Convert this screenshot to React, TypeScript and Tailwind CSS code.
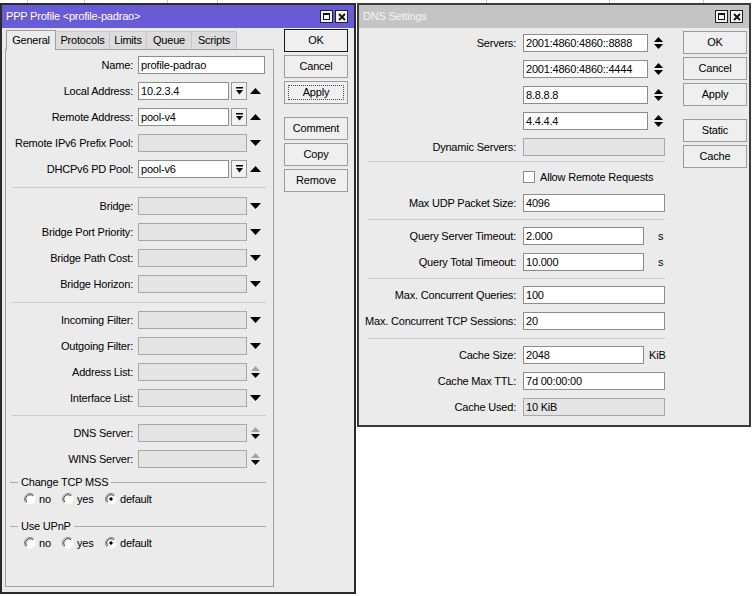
import React from 'react';

const FONT = "font-['Liberation_Sans',Arial,sans-serif]";

function TriUp({ gray }: { gray?: boolean }) {
  return (
    <svg width="11" height="6" viewBox="0 0 11 6">
      <polygon points="0,6 11,6 5.5,0" fill={gray ? '#a0a0a0' : '#000'} />
    </svg>
  );
}

function TriDown() {
  return (
    <svg width="11" height="6" viewBox="0 0 11 6">
      <polygon points="0,0 11,0 5.5,6" fill="#000" />
    </svg>
  );
}

function UpDown({ gray }: { gray?: boolean }) {
  return (
    <svg width="9" height="12" viewBox="0 0 9 12">
      <polygon points="0,5 9,5 4.5,0" fill={gray ? '#a3a3a3' : '#000'} />
      <polygon points="0,7 9,7 4.5,12" fill="#000" />
    </svg>
  );
}

function DropBtn() {
  return (
    <div className="ml-[2px] w-[16px] h-[18px] border border-[#9a9a9a] bg-[#f2f2f2] flex items-center justify-center">
      <svg width="7" height="8" viewBox="0 0 7 8">
        <rect x="0" y="0" width="7" height="1.5" fill="#000" />
        <polygon points="0,3 7,3 3.5,7.5" fill="#000" />
      </svg>
    </div>
  );
}

function Inp({ w, value, disabled }: { w: string; value?: string; disabled?: boolean }) {
  return (
    <div
      className={`${w} h-[18px] border pl-[2px] flex items-center whitespace-nowrap overflow-hidden ${
        disabled ? 'bg-[#e4e4e4] border-[#a8a8a8]' : 'bg-white border-[#8c8c8c]'
      }`}
    >
      {value}
    </div>
  );
}

function Row({ label, children }: { label: string; children: React.ReactNode }) {
  return (
    <div className="flex items-center h-[26px]">
      <div className="w-[132px] text-right pr-[5px] whitespace-nowrap">{label}</div>
      {children}
    </div>
  );
}

function DRow({ label, children }: { label?: string; children: React.ReactNode }) {
  return (
    <div className="flex items-center h-[26px]">
      <div className="w-[164px] text-right pr-[7px] whitespace-nowrap">{label}</div>
      {children}
    </div>
  );
}

function Icon({ children }: { children: React.ReactNode }) {
  return <div className="w-[16px] flex items-center justify-center">{children}</div>;
}

function Btn({ label, def, focus }: { label: string; def?: boolean; focus?: boolean }) {
  return (
    <div
      className={`relative h-[23px] flex items-center justify-center border bg-[#efefef] ${
        def ? 'border-[#1a1a1a]' : 'border-[#9b9b9b]'
      }`}
    >
      {label}
      {focus && <div className="absolute inset-[3px] border border-dotted border-[#444]" />}
    </div>
  );
}

function Radio({ on }: { on?: boolean }) {
  return (
    <svg width="12" height="12" viewBox="0 0 12 12">
      <circle cx="6" cy="6" r="5.5" fill="#fff" />
      <path d="M2.1 9.9 A5.5 5.5 0 0 1 9.9 2.1" stroke="#8a8a8a" fill="none" strokeWidth="1" />
      <path d="M3 9 A4.2 4.2 0 0 1 9 3" stroke="#3a3a3a" fill="none" strokeWidth="1" />
      {on && <circle cx="6" cy="6" r="1.7" fill="#000" />}
    </svg>
  );
}

function RadioRow() {
  return (
    <div className="flex items-center h-[18px] pl-[18px]">
      <div className="w-[38px] flex items-center gap-[3px]">
        <Radio />
        <span>no</span>
      </div>
      <div className="w-[43px] flex items-center gap-[3px]">
        <Radio />
        <span>yes</span>
      </div>
      <div className="flex items-center gap-[3px]">
        <Radio on />
        <span>default</span>
      </div>
    </div>
  );
}

function Group({ label }: { label: string }) {
  return (
    <div className="flex items-center h-[14px] ml-[4px] mr-[7px]">
      <div className="w-[8px] h-px bg-[#a8a8a8]" />
      <span className="mx-[3px] whitespace-nowrap">{label}</span>
      <div className="flex-1 h-px bg-[#a8a8a8]" />
    </div>
  );
}

function TitleBar({ title, active }: { title: string; active?: boolean }) {
  return (
    <div
      className={`h-[23px] flex items-center justify-between pl-[4px] pr-[6px] ${
        active ? 'bg-[#675bd6] text-white' : 'bg-[#c4c4c4] text-[#f4f4f4]'
      }`}
    >
      <span className="leading-none">{title}</span>
      <div className="flex gap-[2px]">
        <div className="w-[13px] h-[13px] border border-[#222] bg-[#f4f4f4] flex items-center justify-center">
          <div className="w-[7px] h-[7px] border border-[#111] border-t-2" />
        </div>
        <div className="w-[13px] h-[13px] border border-[#222] bg-[#f4f4f4] flex items-center justify-center">
          <svg width="8" height="8" viewBox="0 0 8 8">
            <path d="M1 1 L7 7 M7 1 L1 7" stroke="#111" strokeWidth="1.8" />
          </svg>
        </div>
      </div>
    </div>
  );
}

function Sep({ cls }: { cls: string }) {
  return <div className={`${cls} h-px bg-[#cdcdcd]`} />;
}

function PppWindow() {
  return (
    <div className="absolute left-0 top-[3px] w-[356px] h-[591px] border-2 border-[#2a2a2a] bg-[#ebebeb] flex flex-col">
      <TitleBar title="PPP Profile <profile-padrao>" active />
      <div className="flex flex-1 pt-[2px]">
        <div className="ml-[3px] w-[269px] flex flex-col">
          {/* tabs */}
          <div className="flex items-end h-[19px] pl-[1px]">
            <div className="relative z-10 w-[50px] h-[20px] -mb-px border border-b-0 border-[#9f9f9f] bg-[#ebebeb] flex items-center justify-center">
              General
            </div>
            <div className="w-[54px] h-[18px] border-t border-r border-[#c6c6c6] bg-[#dcdcdc] flex items-center justify-center">Protocols</div>
            <div className="w-[37px] h-[18px] border-t border-r border-[#c6c6c6] bg-[#dcdcdc] flex items-center justify-center">Limits</div>
            <div className="w-[45px] h-[18px] border-t border-r border-[#c6c6c6] bg-[#dcdcdc] flex items-center justify-center">Queue</div>
            <div className="w-[45px] h-[18px] border-t border-r border-[#c6c6c6] bg-[#dcdcdc] flex items-center justify-center">Scripts</div>
          </div>
          {/* panel */}
          <div className="h-[538px] border border-[#9f9f9f] pt-[2px] flex flex-col">
            <Row label="Name:">
              <Inp w="w-[127px]" value="profile-padrao" />
            </Row>
            <Row label="Local Address:">
              <Inp w="w-[91px]" value="10.2.3.4" />
              <DropBtn />
              <Icon><TriUp /></Icon>
            </Row>
            <Row label="Remote Address:">
              <Inp w="w-[91px]" value="pool-v4" />
              <DropBtn />
              <Icon><TriUp /></Icon>
            </Row>
            <Row label="Remote IPv6 Prefix Pool:">
              <Inp w="w-[109px]" disabled />
              <Icon><TriDown /></Icon>
            </Row>
            <Row label="DHCPv6 PD Pool:">
              <Inp w="w-[91px]" value="pool-v6" />
              <DropBtn />
              <Icon><TriUp /></Icon>
            </Row>
            <Sep cls="mt-[5px] mb-[5px] ml-[6px] mr-[7px]" />
            <Row label="Bridge:">
              <Inp w="w-[109px]" disabled />
              <Icon><TriDown /></Icon>
            </Row>
            <Row label="Bridge Port Priority:">
              <Inp w="w-[109px]" disabled />
              <Icon><TriDown /></Icon>
            </Row>
            <Row label="Bridge Path Cost:">
              <Inp w="w-[109px]" disabled />
              <Icon><TriDown /></Icon>
            </Row>
            <Row label="Bridge Horizon:">
              <Inp w="w-[109px]" disabled />
              <Icon><TriDown /></Icon>
            </Row>
            <Sep cls="mt-[5px] mb-[4px] ml-[6px] mr-[7px]" />
            <Row label="Incoming Filter:">
              <Inp w="w-[109px]" disabled />
              <Icon><TriDown /></Icon>
            </Row>
            <Row label="Outgoing Filter:">
              <Inp w="w-[109px]" disabled />
              <Icon><TriDown /></Icon>
            </Row>
            <Row label="Address List:">
              <Inp w="w-[109px]" disabled />
              <Icon><UpDown gray /></Icon>
            </Row>
            <Row label="Interface List:">
              <Inp w="w-[109px]" disabled />
              <Icon><TriDown /></Icon>
            </Row>
            <Sep cls="mt-[4px] mb-[4px] ml-[6px] mr-[7px]" />
            <Row label="DNS Server:">
              <Inp w="w-[109px]" disabled />
              <Icon><UpDown gray /></Icon>
            </Row>
            <Row label="WINS Server:">
              <Inp w="w-[109px]" disabled />
              <Icon><UpDown gray /></Icon>
            </Row>
            <div className="mt-[3px]">
              <Group label="Change TCP MSS" />
            </div>
            <div className="mt-[1px]">
              <RadioRow />
            </div>
            <div className="mt-[11px]">
              <Group label="Use UPnP" />
            </div>
            <div className="mt-[1px]">
              <RadioRow />
            </div>
          </div>
        </div>
        <div className="ml-[10px] -mt-px w-[64px] flex flex-col gap-[3px]">
          <Btn label="OK" def />
          <Btn label="Cancel" />
          <Btn label="Apply" focus />
          <div className="h-[7px]" />
          <Btn label="Comment" />
          <Btn label="Copy" />
          <Btn label="Remove" />
        </div>
      </div>
    </div>
  );
}

function DnsWindow() {
  return (
    <div className="absolute left-[357px] top-[3px] w-[394px] h-[424px] border-2 border-[#3a3a3a] bg-[#ebebeb] flex flex-col">
      <TitleBar title="DNS Settings" />
      <div className="flex">
        <div className="w-[324px] pt-[2px] flex flex-col">
          <DRow label="Servers:">
            <Inp w="w-[125px]" value="2001:4860:4860::8888" />
            <div className="w-[20px] flex justify-center"><UpDown /></div>
          </DRow>
          <DRow>
            <Inp w="w-[125px]" value="2001:4860:4860::4444" />
            <div className="w-[20px] flex justify-center"><UpDown /></div>
          </DRow>
          <DRow>
            <Inp w="w-[125px]" value="8.8.8.8" />
            <div className="w-[20px] flex justify-center"><UpDown /></div>
          </DRow>
          <DRow>
            <Inp w="w-[125px]" value="4.4.4.4" />
            <div className="w-[20px] flex justify-center"><UpDown /></div>
          </DRow>
          <DRow label="Dynamic Servers:">
            <Inp w="w-[142px]" disabled />
          </DRow>
          <Sep cls="mt-[1px] mb-[2px] ml-[9px] w-[297px]" />
          <div className="flex items-center h-[26px] pl-[164px]">
            <div className="w-[12px] h-[12px] border border-[#8c8c8c] bg-white" />
            <span className="ml-[5px]">Allow Remote Requests</span>
          </div>
          <DRow label="Max UDP Packet Size:">
            <Inp w="w-[142px]" value="4096" />
          </DRow>
          <Sep cls="mt-[3px] mb-[3px] ml-[9px] w-[297px]" />
          <DRow label="Query Server Timeout:">
            <Inp w="w-[121px]" value="2.000" />
            <span className="ml-[14px]">s</span>
          </DRow>
          <DRow label="Query Total Timeout:">
            <Inp w="w-[121px]" value="10.000" />
            <span className="ml-[14px]">s</span>
          </DRow>
          <Sep cls="mt-[3px] mb-[3px] ml-[9px] w-[297px]" />
          <DRow label="Max. Concurrent Queries:">
            <Inp w="w-[142px]" value="100" />
          </DRow>
          <DRow label="Max. Concurrent TCP Sessions:">
            <Inp w="w-[142px]" value="20" />
          </DRow>
          <Sep cls="mt-[4px] mb-[3px] ml-[9px] w-[297px]" />
          <DRow label="Cache Size:">
            <Inp w="w-[121px]" value="2048" />
            <span className="ml-[5px]">KiB</span>
          </DRow>
          <DRow label="Cache Max TTL:">
            <Inp w="w-[142px]" value="7d 00:00:00" />
          </DRow>
          <DRow label="Cache Used:">
            <Inp w="w-[142px]" value="10 KiB" disabled />
          </DRow>
        </div>
        <div className="mt-[3px] w-[64px] flex flex-col gap-[3px]">
          <Btn label="OK" />
          <Btn label="Cancel" />
          <Btn label="Apply" />
          <div className="h-[7px]" />
          <Btn label="Static" />
          <Btn label="Cache" />
        </div>
      </div>
    </div>
  );
}

export default function App() {
  return (
    <div className={`relative w-[754px] h-[596px] bg-white overflow-hidden text-[11px] tracking-[-0.2px] text-black ${FONT}`}>
      {/* list header behind the windows */}
      <div className="flex h-[4px]">
        <div className="w-[28px] border-r border-[#c4c4c4]" />
        <div className="w-[57px] border-r border-[#c4c4c4]" />
        <div className="w-[83px] border-r border-[#c4c4c4]" />
        <div className="w-[50px] border-r border-[#c4c4c4]" />
        <div className="w-[269px] border-r border-[#c4c4c4]" />
        <div className="w-[123px] border-r border-[#c4c4c4]" />
        <div className="w-[94px] border-r border-[#c4c4c4]" />
      </div>
      <PppWindow />
      <DnsWindow />
    </div>
  );
}
